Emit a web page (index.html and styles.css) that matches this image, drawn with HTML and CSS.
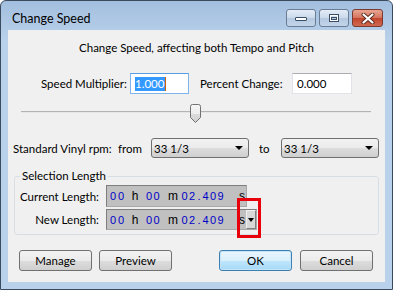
FILE: index.html
```html
<html>

<head>
    <link rel="stylesheet" href="styles.css">
</head>

<body>
    <div class="window">
        <div class="titlebar">
            <div class="title">Change Speed</div>
            <div class="caption-buttons">
                <div class="cap-btn">
                    <svg width="14" height="8" viewBox="0 0 14 8">
                        <rect x="1.5" y="3.5" width="11" height="3" rx="0.5" fill="#fff" stroke="#3b4e66" />
                    </svg>
                </div>
                <div class="cap-btn">
                    <svg width="12" height="10" viewBox="0 0 12 10">
                        <rect x="1.5" y="1.5" width="9" height="7" fill="none" stroke="#3b4e66" stroke-width="1" />
                        <rect x="2.5" y="2.5" width="7" height="5" fill="none" stroke="#fff" stroke-width="1" />
                        <rect x="3.5" y="4.5" width="5" height="2" fill="none" stroke="#3b4e66" stroke-width="1" />
                    </svg>
                </div>
                <div class="cap-btn close">
                    <svg width="14" height="11" viewBox="0 0 14 11">
                        <path d="M2.5 1.5 L11.5 9.5 M11.5 1.5 L2.5 9.5" stroke="#5b2a20" stroke-width="4" stroke-linecap="round" />
                        <path d="M2.5 1.5 L11.5 9.5 M11.5 1.5 L2.5 9.5" stroke="#fff" stroke-width="2.2" stroke-linecap="round" />
                    </svg>
                </div>
            </div>
        </div>

        <div class="client">
            <div class="heading">Change Speed, affecting both Tempo and Pitch</div>

            <div class="row speed-row">
                <span class="lbl lbl-mult">Speed Multiplier:</span>
                <div class="textbox focused"><span class="sel">1.000</span><span class="caret"></span></div>
                <span class="lbl lbl-pct">Percent Change:</span>
                <div class="textbox pct">0.000</div>
            </div>

            <div class="slider">
                <div class="track"></div>
                <svg class="thumb" width="11" height="19" viewBox="0 0 11 19">
                    <defs>
                        <linearGradient id="tg" x1="0" y1="0" x2="0" y2="1">
                            <stop offset="0" stop-color="#f6f6f6" />
                            <stop offset="0.5" stop-color="#ececec" />
                            <stop offset="0.55" stop-color="#dadada" />
                            <stop offset="1" stop-color="#d0d0d0" />
                        </linearGradient>
                    </defs>
                    <path d="M0.5 2.5 Q0.5 0.5 2.5 0.5 H8.5 Q10.5 0.5 10.5 2.5 V13.5 L5.5 18.5 L0.5 13.5 Z" fill="url(#tg)" stroke="#707070" />
                </svg>
            </div>

            <div class="row vinyl-row">
                <span class="lbl lbl-vinyl">Standard Vinyl rpm:</span>
                <span class="lbl lbl-from">from</span>
                <div class="combo"><span>33 1/3</span><span class="arrow"></span></div>
                <span class="lbl lbl-to">to</span>
                <div class="combo"><span>33 1/3</span><span class="arrow"></span></div>
            </div>

            <fieldset class="group">
                <legend>Selection Length</legend>
                <div class="len-row">
                    <span class="len-lbl">Current Length:</span>
                    <div class="timectl">
                        <span class="d first">0</span><span class="d">0</span><span class="u uh">h</span><span class="d">0</span><span class="d n">0</span><span class="u um">m</span><span class="d n">0</span><span class="d">2</span><span class="d dot">.</span><span class="d n">4</span><span class="d">0</span><span class="d n">9</span><span class="u us">s</span>
                    </div>
                </div>
                <div class="len-row new">
                    <span class="len-lbl">New Length:</span>
                    <div class="timectl wide">
                        <span class="d first">0</span><span class="d">0</span><span class="u uh">h</span><span class="d">0</span><span class="d n">0</span><span class="u um">m</span><span class="d n">0</span><span class="d">2</span><span class="d dot">.</span><span class="d n">4</span><span class="d">0</span><span class="d n">9</span><span class="u us">s</span>
                        <span class="menu-btn"><span class="arrow"></span></span>
                    </div>
                </div>
            </fieldset>

            <div class="buttons">
                <div class="btn-group">
                    <div class="btn">Manage</div>
                    <div class="btn">Preview</div>
                </div>
                <div class="btn-group right">
                    <div class="btn default">OK</div>
                    <div class="btn">Cancel</div>
                </div>
            </div>

            <div class="highlight"></div>
        </div>
    </div>
</body>

</html>
```

FILE: styles.css
```css
body {
    margin: 0;
    font-family: 'Lato', 'Open Sans', sans-serif;
    font-size: 11.5px;
    color: #000;
    background-color: #fff;
}

.window {
    width: 393px;
    height: 290px;
    box-sizing: border-box;
    border: 1px solid #3a4b5f;
    border-radius: 6px 6px 0 0;
    background: linear-gradient(#a3bfdf, #b9d1ea 40px, #b9d1ea);
    padding: 0 7px 7px 7px;
    overflow: hidden;
}

.titlebar {
    height: 29px;
    display: flex;
    justify-content: space-between;
    align-items: flex-start;
}

.title {
    padding-left: 4px;
    padding-top: 10px;
    line-height: 15px;
    font-size: 12.5px;
    color: #000;
}

.caption-buttons {
    display: flex;
    gap: 3px;
    padding-top: 8px;
    padding-right: 2px;
}

.cap-btn {
    width: 28px;
    height: 16px;
    border: 1px solid #6a7d94;
    border-radius: 3px;
    background: linear-gradient(#e4ecf6, #cbd9ea 50%, #b4c8e0 51%, #c3d5ea);
    display: flex;
    align-items: center;
    justify-content: center;
}

.cap-btn.close {
    width: 29px;
    border-color: #7a3a30;
    background: linear-gradient(#e9a593, #d3735c 50%, #c2452c 51%, #cf6a4f);
}

.client {
    height: 252px;
    background-color: #f0f0f0;
    padding-top: 10px;
    box-sizing: border-box;
    position: relative;
}

.heading {
    text-align: center;
    line-height: 15px;
    height: 15px;
}

.row {
    display: flex;
    align-items: center;
}

.lbl {
    flex: none;
    white-space: nowrap;
}

.speed-row {
    margin-top: 18px;
    padding-left: 33px;
    height: 21px;
}

.lbl-mult {
    width: 89px;
}

.lbl-pct {
    width: 92px;
    padding-left: 11px;
}

.textbox {
    flex: none;
    width: 59px;
    height: 21px;
    box-sizing: border-box;
    background-color: #fff;
    border: 1px solid #e2e3ea;
    border-top-color: #abadb3;
    padding-left: 4px;
    display: flex;
    align-items: center;
}

.textbox.focused {
    border-color: #7eb4ea;
    border-top-color: #569de5;
}

.textbox.pct {
    width: 60px;
}

.sel {
    background-color: #3399ff;
    color: #fff;
    line-height: 14px;
    padding-right: 1px;
}

.caret {
    width: 1px;
    height: 14px;
    background-color: #d06000;
}

.slider {
    position: relative;
    margin-top: 10px;
    margin-left: 13px;
    width: 350px;
    height: 20px;
}

.track {
    position: absolute;
    left: 0;
    right: 0;
    top: 7px;
    height: 1px;
    background-color: #b4b4b4;
    border-bottom: 1px solid #e6e6e6;
}

.thumb {
    position: absolute;
    left: 169px;
    top: 0px;
}

.vinyl-row {
    margin-top: 14px;
    padding-left: 5px;
    height: 20px;
}

.lbl-vinyl {
    width: 105px;
}

.lbl-from {
    width: 33px;
}

.lbl-to {
    width: 22px;
    padding-left: 10px;
}

.combo {
    flex: none;
    width: 98px;
    height: 20px;
    box-sizing: border-box;
    border: 1px solid #707070;
    border-radius: 3px;
    background: linear-gradient(#f2f2f2, #ebebeb 50%, #dddddd 51%, #cfcfcf);
    display: flex;
    align-items: center;
    justify-content: space-between;
    padding-left: 2px;
    padding-right: 5px;
}

.arrow {
    width: 0;
    height: 0;
    border-left: 4px solid transparent;
    border-right: 4px solid transparent;
    border-top: 4px solid #000;
}

.group {
    margin: 11px 0 0 6px;
    width: 365px;
    box-sizing: border-box;
    border: 1px solid #d5dfe5;
    border-radius: 3px;
    padding: 2px 0 4px 0;
}

.group legend {
    padding: 0 2px;
    margin-left: 5px;
    line-height: 14px;
}

.len-row {
    display: flex;
    align-items: center;
    height: 22px;
}

.len-row.new {
    margin-top: 2px;
    height: 21px;
}

.len-lbl {
    flex: none;
    width: 84px;
    text-align: right;
    padding-right: 7px;
}

.timectl {
    flex: none;
    width: 141px;
    height: 22px;
    box-sizing: border-box;
    background-color: #c0c0c0;
    border: 1px solid #a8a8a8;
    border-top-color: #7e7e7e;
    border-left-color: #7e7e7e;
    display: flex;
    align-items: center;
    overflow: hidden;
    font-family: 'Liberation Sans', sans-serif;
    font-size: 11px;
    white-space: nowrap;
}

.timectl.wide {
    width: 151px;
    height: 21px;
}

.d,
.u {
    display: inline-block;
    box-sizing: border-box;
    text-align: center;
    flex: none;
}

.d {
    width: 8px;
    color: #0000c8;
}

.d.n {
    width: 7px;
}

.d.first {
    margin-left: 2px;
}

.d.dot {
    width: 6px;
}

.u {
    font-size: 12px;
}

.uh {
    width: 20px;
}

.um {
    width: 21px;
    padding-left: 5px;
}

.us {
    width: 22px;
    padding-left: 15px;
    text-align: left;
}

.menu-btn {
    width: 10px;
    height: 19px;
    box-sizing: border-box;
    border: 1px solid #f0f0f0;
    border-right-color: #808080;
    border-bottom-color: #808080;
    background-color: #d8d8d8;
    display: flex;
    align-items: center;
    justify-content: center;
    flex: none;
}

.menu-btn .arrow {
    border-left-width: 3px;
    border-right-width: 3px;
    border-top-width: 4px;
}

.highlight {
    position: absolute;
    left: 229px;
    top: 168px;
    width: 24px;
    height: 40px;
    box-sizing: border-box;
    border: 3px solid #e8000b;
}

.buttons {
    display: flex;
    justify-content: space-between;
    padding: 0 12px 0 11px;
    margin-top: 15px;
}

.btn-group {
    display: flex;
    gap: 7px;
}

.btn-group.right {
    gap: 8px;
}

.btn {
    width: 73px;
    height: 21px;
    box-sizing: border-box;
    border: 1px solid #707070;
    border-radius: 3px;
    background: linear-gradient(#f2f2f2, #ebebeb 50%, #dddddd 51%, #cfcfcf);
    display: flex;
    align-items: center;
    justify-content: center;
}

.btn.default {
    border-color: #3c7fb1;
    background: linear-gradient(#eaf6fd, #d9f0fc 50%, #bee6fd 51%, #a7d9f5);
    box-shadow: inset 0 0 0 1px #c5e4f7;
}
```
